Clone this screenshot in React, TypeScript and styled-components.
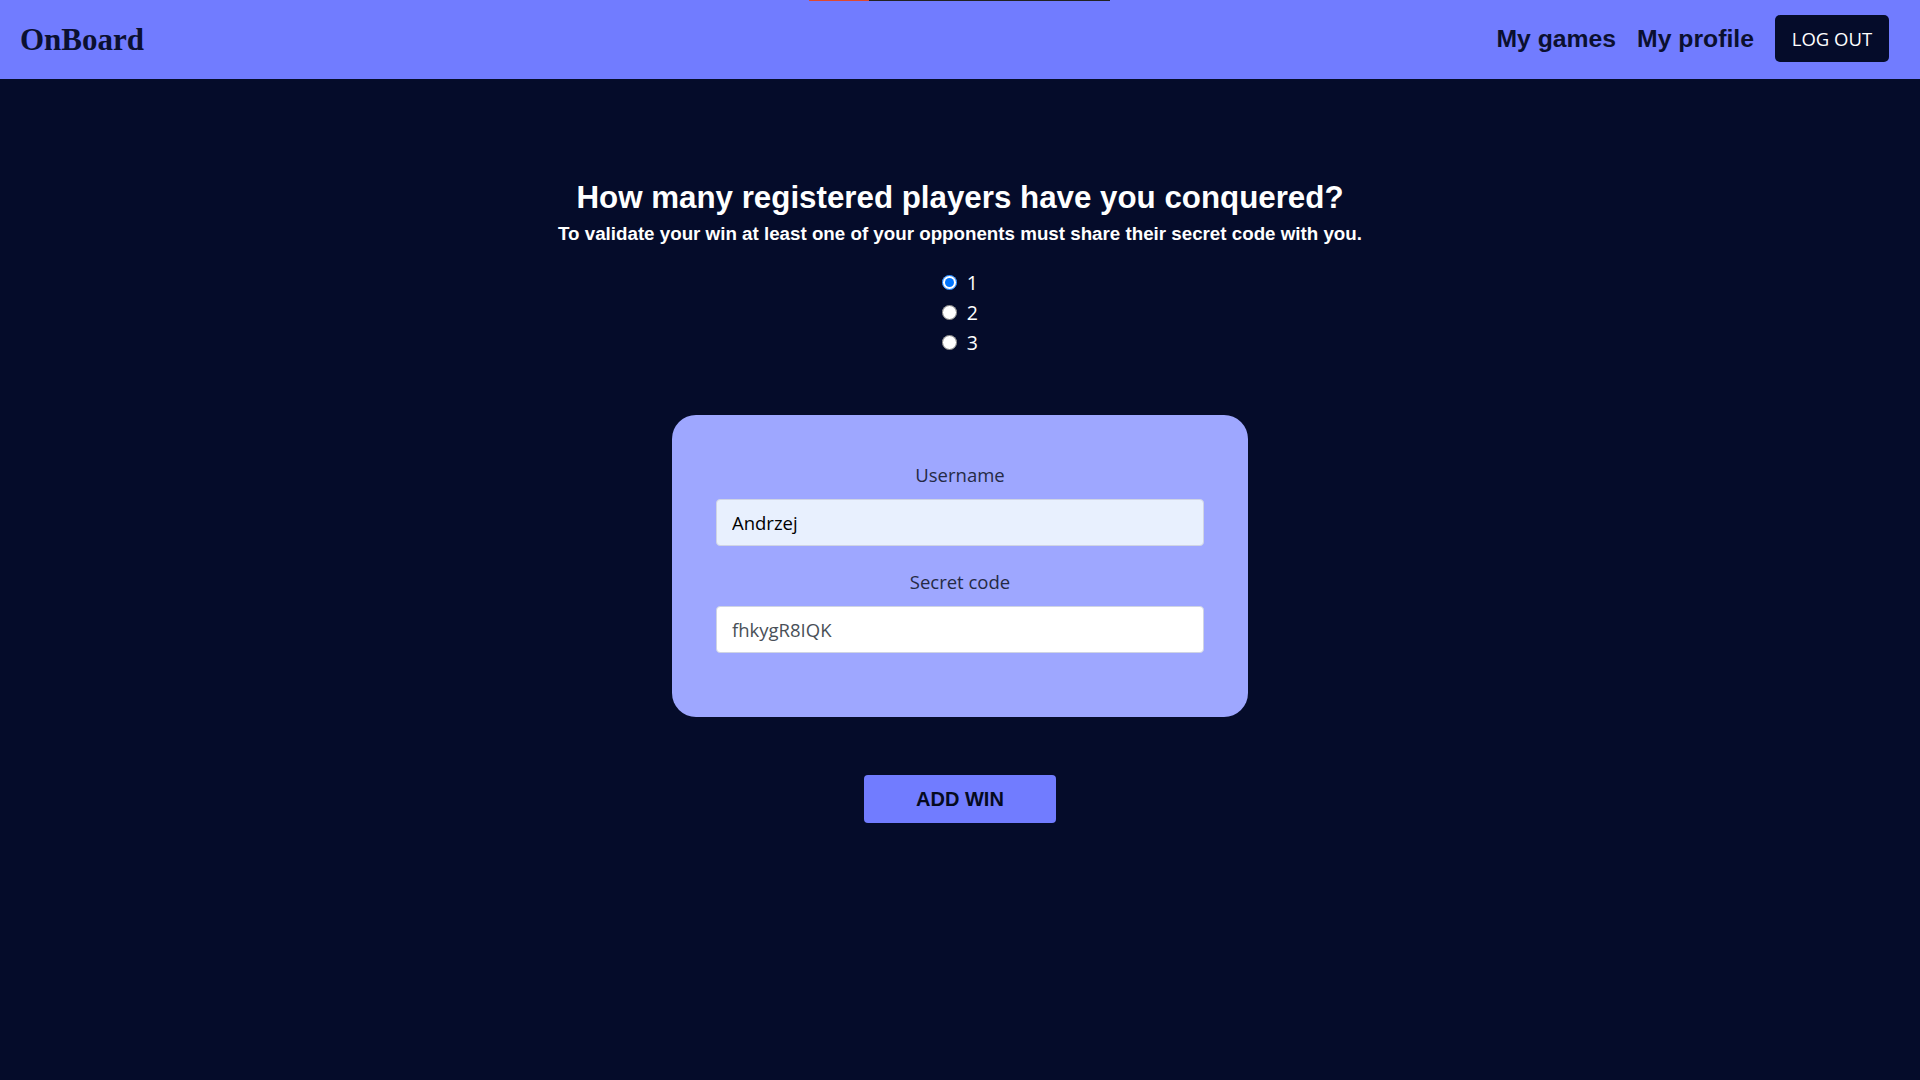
import React, { useState } from "react";
import styled, { createGlobalStyle } from "styled-components";

const GlobalStyle = createGlobalStyle`
  html, body {
    margin: 0;
    padding: 0;
    background: #050c2a;
  }
  * { box-sizing: border-box; }
`;

const Page = styled.div`
  min-height: 100vh;
  background: #050c2a;
  display: flex;
  flex-direction: column;
`;

const Header = styled.header`
  position: relative;
  height: 79px;
  background: #717cff;
  display: flex;
  align-items: center;
  justify-content: space-between;
  padding: 0 31px 3px 20px;
`;

const Progress = styled.div`
  position: absolute;
  top: 0;
  left: 809px;
  width: 301px;
  height: 1px;
  display: flex;
`;

const ProgressPart = styled.span<{ $color: string; $w: number }>`
  display: block;
  height: 100%;
  width: ${(p) => p.$w}px;
  background: ${(p) => p.$color};
`;

const Logo = styled.h1`
  margin: 0;
  padding-top: 3px;
  font-family: "Liberation Serif", "Times New Roman", serif;
  font-weight: 700;
  font-size: 31px;
  line-height: 40px;
  color: #0b1030;
`;

const Nav = styled.nav`
  display: flex;
  align-items: center;
  gap: 21px;
`;

const NavLink = styled.a`
  font-family: "Liberation Sans", Arial, sans-serif;
  font-weight: 700;
  font-size: 24.75px;
  line-height: 30px;
  color: #0b1030;
  text-decoration: none;
  cursor: pointer;
  padding-top: 2px;
`;

const LogoutButton = styled.button`
  width: 114px;
  height: 47px;
  border: none;
  border-radius: 5px;
  background: #050c2a;
  color: #ffffff;
  font-family: "Open Sans", "Noto Sans", sans-serif;
  font-size: 18.5px;
  padding: 0;
  cursor: pointer;
`;

const Main = styled.main`
  display: flex;
  flex-direction: column;
  align-items: center;
  padding-top: 101px;
`;

const Title = styled.h2`
  margin: 0;
  font-family: "Liberation Sans", Arial, sans-serif;
  font-weight: 700;
  font-size: 31.3px;
  line-height: 36px;
  color: #ffffff;
  text-align: center;
`;

const Subtitle = styled.h3`
  margin: 7px 0 0;
  font-family: "Liberation Sans", Arial, sans-serif;
  font-weight: 700;
  font-size: 18.75px;
  line-height: 22px;
  color: #ffffff;
  text-align: center;
`;

const RadioGroup = styled.div`
  margin-top: 22px;
  display: flex;
  flex-direction: column;
`;

const RadioRow = styled.label`
  display: flex;
  align-items: center;
  height: 30px;
  font-family: "Open Sans", "Noto Sans", sans-serif;
  font-size: 19.5px;
  color: #ffffff;
  cursor: pointer;
`;

const Radio = styled.input`
  width: 15px;
  height: 15px;
  margin: 0 9.5px 0 0;
  cursor: pointer;
`;

const Card = styled.form`
  margin-top: 58px;
  width: 576px;
  background: #9ea7ff;
  border-radius: 24px;
  padding: 46px 44px 64px;
  display: flex;
  flex-direction: column;
  gap: 22px;
`;

const Field = styled.div`
  display: flex;
  flex-direction: column;
  align-items: center;
`;

const Label = styled.label`
  font-family: "Open Sans", "Noto Sans", sans-serif;
  font-size: 18.5px;
  line-height: 27px;
  color: #252a45;
  margin-bottom: 11px;
`;

const Input = styled.input<{ $autofill?: boolean }>`
  width: 100%;
  height: 47px;
  border: 1px solid #cfd4e4;
  border-radius: 4px;
  padding: 0 15px;
  font-family: "Open Sans", "Noto Sans", sans-serif;
  font-size: 18.5px;
  color: ${(p) => (p.$autofill ? "#000000" : "#495057")};
  background: ${(p) => (p.$autofill ? "#e8f0fe" : "#ffffff")};
  outline: none;
`;

const SubmitButton = styled.button`
  margin-top: 58px;
  width: 192px;
  height: 48px;
  border: none;
  border-radius: 4px;
  background: #717cff;
  color: #050a20;
  font-family: "Liberation Sans", Arial, sans-serif;
  font-weight: 700;
  font-size: 20px;
  cursor: pointer;
`;

export default function App() {
  const [count, setCount] = useState("1");
  const [username, setUsername] = useState("Andrzej");
  const [code, setCode] = useState("fhkygR8IQK");

  return (
    <Page>
      <GlobalStyle />
      <Header>
        <Progress>
          <ProgressPart $color="#e0482e" $w={60} />
          <ProgressPart $color="#222222" $w={241} />
        </Progress>
        <Logo>OnBoard</Logo>
        <Nav>
          <NavLink>My games</NavLink>
          <NavLink>My profile</NavLink>
          <LogoutButton>LOG OUT</LogoutButton>
        </Nav>
      </Header>
      <Main>
        <Title>How many registered players have you conquered?</Title>
        <Subtitle>
          To validate your win at least one of your opponents must share their secret code with you.
        </Subtitle>
        <RadioGroup>
          {["1", "2", "3"].map((v) => (
            <RadioRow key={v}>
              <Radio
                type="radio"
                name="count"
                value={v}
                checked={count === v}
                onChange={() => setCount(v)}
              />
              {v}
            </RadioRow>
          ))}
        </RadioGroup>
        <Card onSubmit={(e) => e.preventDefault()}>
          <Field>
            <Label htmlFor="username">Username</Label>
            <Input
              id="username"
              $autofill
              value={username}
              onChange={(e) => setUsername(e.target.value)}
            />
          </Field>
          <Field>
            <Label htmlFor="code">Secret code</Label>
            <Input id="code" value={code} onChange={(e) => setCode(e.target.value)} />
          </Field>
        </Card>
        <SubmitButton>ADD WIN</SubmitButton>
      </Main>
    </Page>
  );
}
